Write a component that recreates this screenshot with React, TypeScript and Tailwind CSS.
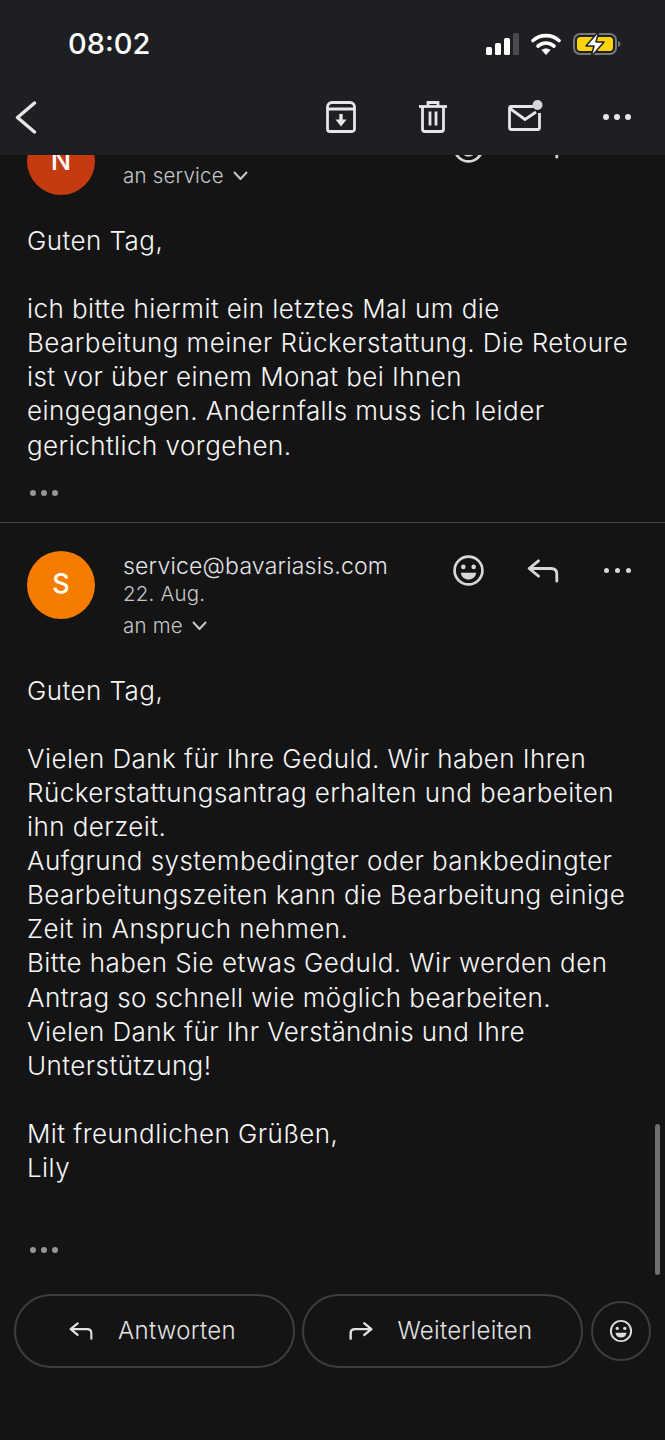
import React from "react";

const font = { fontFamily: "Inter, sans-serif" };

function Smile({ size = 32, className = "" }: { size?: number; className?: string }) {
  return (
    <svg width={size} height={size} viewBox="0 0 32 32" fill="none" className={className}>
      <circle cx="16" cy="16" r="13.5" stroke="currentColor" strokeWidth="2.6" />
      <circle cx="11" cy="12.5" r="2.2" fill="currentColor" />
      <circle cx="21" cy="12.5" r="2.2" fill="currentColor" />
      <path d="M8.5 18.2h15c-.6 4.2-3.6 6.6-7.5 6.6s-6.9-2.4-7.5-6.600z" fill="currentColor" />
    </svg>
  );
}

function ReplyIcon({ width = 32, height = 32, className = "" }: { width?: number; height?: number; className?: string }) {
  return (
    <svg width={width} height={height} viewBox="0 0 32 24" fill="none" className={className}>
      <path d="M11.500 1.800 2.200 9.500l9.300 7.700M2.200 9.500H24c3.500 0 5.800 2 5.800 5.300v7.400" stroke="currentColor" strokeWidth="2.800" strokeLinecap="round" strokeLinejoin="round" />
    </svg>
  );
}

function ForwardIcon({ width = 24, height = 18 }: { width?: number; height?: number }) {
  return (
    <svg width={width} height={height} viewBox="0 0 32 24" fill="none">
      <path d="M20.500 1.800l9.300 7.700-9.300 7.700M29.800 9.500H8c-3.500 0-5.800 2-5.800 5.300v7.400" stroke="currentColor" strokeWidth="3.200" strokeLinecap="round" strokeLinejoin="round" />
    </svg>
  );
}

function Chevron() {
  return (
    <svg width="15" height="10" viewBox="0 0 15 10" fill="none">
      <path d="M1.500 1.500 7.500 8l6-6.500" stroke="currentColor" strokeWidth="2" strokeLinecap="round" strokeLinejoin="round" />
    </svg>
  );
}

function Dots({ className = "", dot = "size-[6px]" }: { className?: string; dot?: string }) {
  return (
    <div className={`flex ${className}`}>
      <span className={`rounded-full bg-current ${dot}`} />
      <span className={`rounded-full bg-current ${dot}`} />
      <span className={`rounded-full bg-current ${dot}`} />
    </div>
  );
}

function StatusBar() {
  return (
    <div className="flex h-[88px] items-center justify-between pl-[68px] pr-[44px]">
      <span className="-translate-y-[1px] text-[29px] font-medium leading-none text-white">08:02</span>
      <div className="flex items-center gap-[12px]">
        <svg width="33" height="22" viewBox="0 0 33 22">
          <rect x="0" y="14" width="6" height="8" rx="1.500" fill="#fff" />
          <rect x="9" y="10" width="6" height="12" rx="1.500" fill="#fff" />
          <rect x="18" y="5" width="6" height="17" rx="1.500" fill="#fff" />
          <rect x="27" y="0" width="6" height="22" rx="1.500" fill="#4a4b4e" />
        </svg>
        <svg width="30" height="22" viewBox="0 0 30 22" fill="none">
          <path d="M2 7.500C9.500 1 20.500 1 28 7.500" stroke="#fff" strokeWidth="3.600" strokeLinecap="round" />
          <path d="M7 13c4.800-4 11.200-4 16 0" stroke="#fff" strokeWidth="3.600" strokeLinecap="round" />
          <path d="M15 22l-4.500-5c2.600-2 6.400-2 9 0z" fill="#fff" />
        </svg>
        <svg width="48" height="26" viewBox="0 0 48 26" fill="none">
          <rect x="1" y="3" width="42" height="20" rx="6" stroke="#77787a" strokeWidth="2" />
          <rect x="4" y="6" width="36" height="14" rx="3.500" fill="#fbd40a" />
          <path d="M45 10v6c1.500-.5 2.500-1.700 2.500-3s-1-2.500-2.500-3z" fill="#77787a" />
          <path d="M26 0 13 15h8l-3 11 13-15h-8z" fill="#fff" stroke="#1e1f22" strokeWidth="1.500" strokeLinejoin="round" />
        </svg>
      </div>
    </div>
  );
}

function ToolBar() {
  return (
    <div className="flex h-[67px] items-center pb-[9px] pl-[15px] pr-[34px] text-[#e6e6e7]">
      <svg width="22" height="33" viewBox="0 0 22 33" fill="none">
        <path d="M19.500 2 2.500 16.500l17 14.500" stroke="currentColor" strokeWidth="3.400" strokeLinecap="round" strokeLinejoin="round" />
      </svg>
      <div className="ml-auto flex items-center">
        <svg width="30" height="32" viewBox="0 0 30 32" fill="none">
          <path d="M1.500 8V6a4.500 4.500 0 0 1 4.500-4.500h18a4.500 4.500 0 0 1 4.500 4.500v2z" stroke="currentColor" strokeWidth="2.800" strokeLinejoin="round" />
          <path d="M1.500 8v20a2.500 2.500 0 0 0 2.500 2.500h22a2.500 2.500 0 0 0 2.500-2.500V8" stroke="currentColor" strokeWidth="2.800" />
          <path d="M15 13v8" stroke="currentColor" strokeWidth="3.400" />
          <path d="M9.500 18.500h11L15 25.500z" fill="currentColor" />
        </svg>
        <svg width="28" height="32" viewBox="0 0 28 32" fill="none" className="ml-[63px]">
          <path d="M0 5.500h28" stroke="currentColor" strokeWidth="2.800" />
          <path d="M9 5V1.500h10V5" stroke="currentColor" strokeWidth="2.800" />
          <path d="M3.500 5.500v22.500a2.500 2.500 0 0 0 2.500 2.500h16a2.500 2.500 0 0 0 2.500-2.500V5.500" stroke="currentColor" strokeWidth="2.800" />
          <path d="M11 10.500v14M17 10.500v14" stroke="currentColor" strokeWidth="2.800" />
        </svg>
        <svg width="35" height="32" viewBox="0 0 35 32" fill="none" className="ml-[61px] -translate-y-[1px]">
          <path d="M25 6.500H3A1.500 1.500 0 0 0 1.500 8v20A1.500 1.500 0 0 0 3 29.500h27a1.500 1.500 0 0 0 1.500-1.500V13" stroke="currentColor" strokeWidth="2.800" />
          <path d="M2 8.500l15 11L28 12" stroke="currentColor" strokeWidth="2.800" />
          <circle cx="29.500" cy="5" r="5" fill="#d5d6d8" />
        </svg>
        <Dots className="ml-[60px] gap-[5px]" dot="size-[6px]" />
      </div>
    </div>
  );
}

function MessageHead({ color, initial, name, date, to }: { color: string; initial: string; name: string; date?: string; to: string }) {
  return (
    <div className="flex">
      <div className={`flex size-[68px] shrink-0 items-center justify-center rounded-full text-[27px] font-medium text-white ${color}`}>{initial}</div>
      <div className="ml-[28px] min-w-0 flex-1 text-[#c6c6c7]">
        <div className="h-[30px] text-[23px] font-light leading-[31px] tracking-[0.2px] text-[#e2e2e3]">{name}</div>
        {date && <div className="h-[26px] text-[20.500px] font-light leading-[26px] tracking-[0.2px]">{date}</div>}
        <div className="mt-[6px] flex h-[26px] items-center gap-[9px] text-[20.500px] font-light leading-[26px] tracking-[0.2px]">
          {to}
          <Chevron />
        </div>
      </div>
      <div className="flex h-[40px] items-center self-start text-[#d8d8d9]">
        <Smile size={33} />
        <ReplyIcon width={32} height={24} className="ml-[42px]" />
        <Dots className="ml-[45px] gap-[6px]" dot="size-[5px]" />
      </div>
    </div>
  );
}

function Pill({ icon, label, width }: { icon: React.ReactNode; label: string; width: string }) {
  return (
    <div className={`flex h-[74px] items-center justify-center gap-[25px] rounded-full border-2 border-[#3d3d3e] pr-[4px] text-[24px] font-[350] tracking-[0.3px] text-[#e2e2e2] ${width}`}>
      {icon}
      {label}
    </div>
  );
}

export default function App() {
  return (
    <div style={font} className="relative h-[1440px] w-[665px] overflow-hidden bg-[#141414]">
      <header className="relative z-10 h-[155px] bg-[#1e1f22]">
        <StatusBar />
        <ToolBar />
      </header>

      <main className="-mt-[28px]">
        <section className="pl-[27px] pr-[34px]">
          <MessageHead color="bg-[#c53a10]" initial="N" name="" to="an service" />
          <div className="mt-[29px] text-[26px] font-[350] leading-[34.100px] tracking-[0.44px] text-[#f6f6f6]">
            Guten Tag,
            <br />
            <br />
            ich bitte hiermit ein letztes Mal um die
            <br />
            Bearbeitung meiner Rückerstattung. Die Retoure
            <br />
            ist vor über einem Monat bei Ihnen
            <br />
            eingegangen. Andernfalls muss ich leider
            <br />
            gerichtlich vorgehen.
          </div>
          <Dots className="mt-[27px] gap-[5px] pl-[3px] text-[#969696]" />
        </section>

        <hr className="mt-[26px] border-t border-[#454546]" />

        <section className="pl-[27px] pr-[34px] pt-[28px]">
          <MessageHead color="bg-[#f57c00]" initial="S" name="service@bavariasis.com" date="22. Aug." to="an me" />
          <div className="mt-[35px] text-[26px] font-[350] leading-[34.100px] tracking-[0.44px] text-[#f6f6f6]">
            Guten Tag,
            <br />
            <br />
            Vielen Dank für Ihre Geduld. Wir haben Ihren
            <br />
            Rückerstattungsantrag erhalten und bearbeiten
            <br />
            ihn derzeit.
            <br />
            Aufgrund systembedingter oder bankbedingter
            <br />
            Bearbeitungszeiten kann die Bearbeitung einige
            <br />
            Zeit in Anspruch nehmen.
            <br />
            Bitte haben Sie etwas Geduld. Wir werden den
            <br />
            Antrag so schnell wie möglich bearbeiten.
            <br />
            Vielen Dank für Ihr Verständnis und Ihre
            <br />
            Unterstützung!
            <br />
            <br />
            Mit freundlichen Grüßen,
            <br />
            Lily
          </div>
          <Dots className="mt-[62px] gap-[5px] pl-[3px] text-[#969696]" />
        </section>

        <div className="mt-[41px] flex items-center gap-[7px] pl-[14px]">
          <Pill width="w-[281px]" label="Antworten" icon={<ReplyIcon width={24} height={18} />} />
          <Pill width="w-[281px]" label="Weiterleiten" icon={<ForwardIcon />} />
          <div className="ml-[1px] flex size-[60px] items-center justify-center rounded-full border-2 border-[#3d3d3e] text-[#dcdcdc]">
            <Smile size={24} />
          </div>
        </div>
      </main>

      <div className="absolute right-[5px] top-[1124px] h-[151px] w-[5px] rounded-full bg-[#6f6f70]" />
    </div>
  );
}
